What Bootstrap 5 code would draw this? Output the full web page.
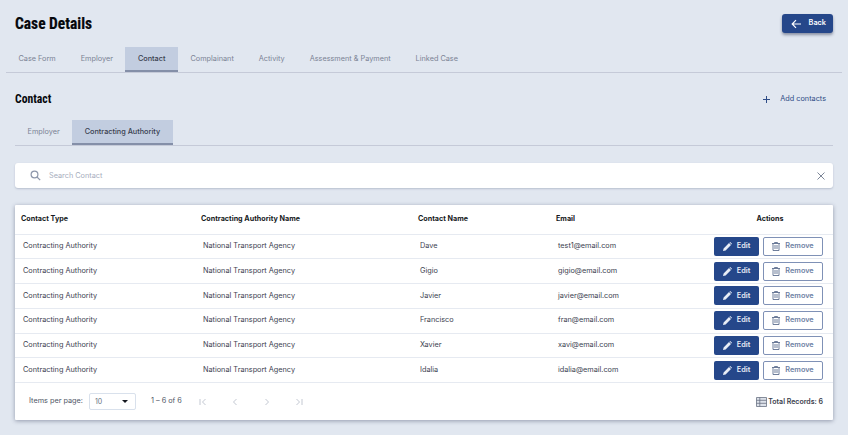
<!DOCTYPE html>
<html lang="en">
<head>
<meta charset="utf-8">
<title>Case Details</title>
<link href="https://cdn.jsdelivr.net/npm/bootstrap@5.3.0/dist/css/bootstrap.min.css" rel="stylesheet">
<style>
html,body{height:435px;overflow:hidden}
body{background:#e1e7f0;font-family:Inter,Lato,"Noto Sans",sans-serif;font-size:7.3px;color:#3c4250;padding:13px 15px 0}
.page-head{height:34px}
.page-title{font-family:"Liberation Sans Narrow","Roboto Condensed","Open Sans",sans-serif;font-weight:700;font-size:17px;color:#06080c;margin:0;line-height:20px;transform:scaleX(.91);transform-origin:left;-webkit-text-stroke:.2px #06080c}
.back-btn{width:51px;height:19px;background:#25478a;color:#fff;border:0;border-radius:3px;font-size:7.3px;font-weight:600;box-shadow:0 2px 3px rgba(30,40,70,.45);padding:0 7px 0 9px;margin-top:1px}
.tabs-main{margin:0 -9px;height:26px;border-bottom:1px solid #c5cad8}
.tab-item{display:flex;align-items:center;padding:2px 12.5px 0;height:25px;color:#7b8394;font-size:7.3px;border-bottom:2px solid transparent}
.tab-item.is-on{background:#c2cde0;color:#39404f;border-bottom-color:#848fa8;font-weight:500}
.sec-head{height:47px;padding-top:19px}
.sec-title{font-family:"Liberation Sans Narrow","Roboto Condensed","Open Sans",sans-serif;font-weight:700;font-size:13px;color:#06080c;margin:0;line-height:14px;transform:scaleX(.9);transform-origin:left}
.add-link{color:#2e4c86;font-size:7.3px;gap:10px;padding-right:7px;height:14px}
.tabs-sub{height:26px;border-bottom:1px solid #c5cad8}
.search-box{height:25px;margin-top:17px;background:#fff;border-radius:3px;box-shadow:0 1px 2px rgba(90,100,130,.3);padding:0 8px 0 15px}
.search-ph{color:#a6adbd;margin-left:8px;flex:1;padding-top:1px}
.table-card{margin-top:17px;width:818px;height:215px;background:#fff;box-shadow:0 1px 4px rgba(50,60,90,.45);border-radius:1px}
.data-table{table-layout:fixed;margin:0;width:818px;font-size:7.3px}
.data-table th{height:29px;padding:0 6px;font-weight:700;color:#161a22;vertical-align:middle;border-bottom:1px solid #e6eaf1;background:transparent;font-size:7.2px}
.data-table td{height:24.8px;padding:0 8px;vertical-align:middle;color:#3c4250;border-bottom:1px solid #e6eaf1;background:transparent}
.data-table th.act-h{text-align:center;padding-left:3px;padding-right:0}
.data-table td.act-cell{white-space:nowrap;padding:0 0 0 10px}
.btn-edit,.btn-rem{height:19px;border-radius:2px;font-size:7.3px;font-weight:600;padding:0;display:inline-flex;align-items:center;justify-content:center;gap:5px}
.btn-edit{width:45px;background:#25478a;color:#e8edf6;border:0}
.btn-rem{width:60px;background:#fff;color:#6d7fa3;border:1px solid #7f91b6;margin-left:4px}
.foot-bar{height:37px;padding:0 10px 0 14px;color:#4f5666}
.per-box{width:47px;height:17px;border:1px solid #d9e1ec;border-radius:2px;margin:0 15px 0 6px;padding:0 7px 0 5px;font-size:7px;color:#6a7181}
.caret-down{width:0;height:0;border-left:3px solid transparent;border-right:3px solid transparent;border-top:3px solid #15181f}
.pager{gap:24px;margin-left:17px}
.total-rec{font-weight:600;color:#3a404c;gap:1px;font-size:7px}
</style>
</head>
<body>
<div class="page-head d-flex justify-content-between align-items-start">
  <h1 class="page-title">Case Details</h1>
  <button class="back-btn d-flex align-items-center justify-content-between" type="button">
    <svg width="10" height="10" viewBox="0 0 10 10" fill="none" stroke="#fff" stroke-width="1.2"><path d="M10 5H1.500M5 1.200 1.200 5 5 8.800"/></svg><span>Back</span>
  </button>
</div>
<div class="tabs-main d-flex">
  <div class="tab-item">Case Form</div>
  <div class="tab-item">Employer</div>
  <div class="tab-item is-on">Contact</div>
  <div class="tab-item">Complainant</div>
  <div class="tab-item">Activity</div>
  <div class="tab-item">Assessment &amp; Payment</div>
  <div class="tab-item">Linked Case</div>
</div>
<div class="sec-head d-flex justify-content-between align-items-start">
  <h2 class="sec-title">Contact</h2>
  <div class="add-link d-flex align-items-center">
    <svg width="7" height="7" viewBox="0 0 7 7" stroke="#2e4c86" stroke-width="1"><path d="M3.5 0v7M0 3.5h7"/></svg><span>Add contacts</span>
  </div>
</div>
<div class="tabs-sub d-flex">
  <div class="tab-item">Employer</div>
  <div class="tab-item is-on">Contracting Authority</div>
</div>
<div class="search-box d-flex align-items-center">
  <svg width="11" height="11" viewBox="0 0 11 11" fill="none" stroke="#8e97ab" stroke-width="1.2"><circle cx="4.5" cy="4.5" r="3.4"/><path d="M7 7l3.200 3.200"/></svg>
  <span class="search-ph">Search Contact</span>
  <svg width="8" height="8" viewBox="0 0 8 8" stroke="#7d8698" stroke-width="1"><path d="M.5.5l7 7M7.500.5l-7 7"/></svg>
</div>
<div class="table-card">
  <table class="table data-table">
    <colgroup><col style="width:180px"><col style="width:217px"><col style="width:138px"><col style="width:154px"><col></colgroup>
    <thead><tr><th>Contact Type</th><th>Contracting Authority Name</th><th>Contact Name</th><th>Email</th><th class="act-h">Actions</th></tr></thead>
    <tbody id="rows"></tbody>
  </table>
  <div class="foot-bar d-flex align-items-center">
    <span>Items per page:</span>
    <div class="per-box d-flex align-items-center justify-content-between"><span>10</span><i class="caret-down"></i></div>
    <span>1 – 6 of 6</span>
    <div class="pager d-flex align-items-center">
      <svg width="8" height="8" viewBox="0 0 8 8" fill="none" stroke="#c3c8d2"><path d="M1 1v6M6.500 1 3.500 4l3 3"/></svg>
      <svg width="8" height="8" viewBox="0 0 8 8" fill="none" stroke="#c3c8d2"><path d="M5.500 1 2.500 4l3 3"/></svg>
      <svg width="8" height="8" viewBox="0 0 8 8" fill="none" stroke="#c3c8d2"><path d="M2.500 1l3 3-3 3"/></svg>
      <svg width="8" height="8" viewBox="0 0 8 8" fill="none" stroke="#c3c8d2"><path d="M7 1v6M1.500 1l3 3-3 3"/></svg>
    </div>
    <div class="total-rec d-flex align-items-center ms-auto">
      <svg width="11" height="10" viewBox="0 0 11 10" fill="#dde2ea" stroke="#6a7283" stroke-width=".8"><path d="M.5.5h10v9H.5zM.5 3.300h10M.5 6.300h10M3.800.5v9"/></svg>
      <span>Total Records: 6</span>
    </div>
  </div>
</div>
<script>
var data=[["Dave","test1@email.com"],["Gigio","gigio@email.com"],["Javier","javier@email.com"],["Francisco","fran@email.com"],["Xavier","xavi@email.com"],["Idalia","idalia@email.com"]];
var pen='<svg width="9" height="9" viewBox="0 0 9 9" fill="#e8edf6"><path d="M0 9l.6-2.600L6 1l2 2-5.400 5.400zM6.500.5l.7-.5 1.800 1.800-.5.7z"/></svg>';
var bin='<svg width="8" height="9" viewBox="0 0 8 9" fill="none" stroke="#5f6f90" stroke-width=".9"><path d="M0 1.500h8M2.500 1.500V.5h3v1M1 1.500V8.500h6V1.500M3 3v4M5 3v4"/></svg>';
document.getElementById("rows").innerHTML=data.map(function(r){
return '<tr><td>Contracting Authority</td><td>National Transport Agency</td><td>'+r[0]+'</td><td>'+r[1]+'</td><td class="act-cell"><button class="btn-edit" type="button">'+pen+'Edit</button><button class="btn-rem" type="button">'+bin+'Remove</button></td></tr>';
}).join("");
</script>
<script src="https://cdn.jsdelivr.net/npm/bootstrap@5.3.0/dist/js/bootstrap.bundle.min.js"></script>
</body>
</html>
